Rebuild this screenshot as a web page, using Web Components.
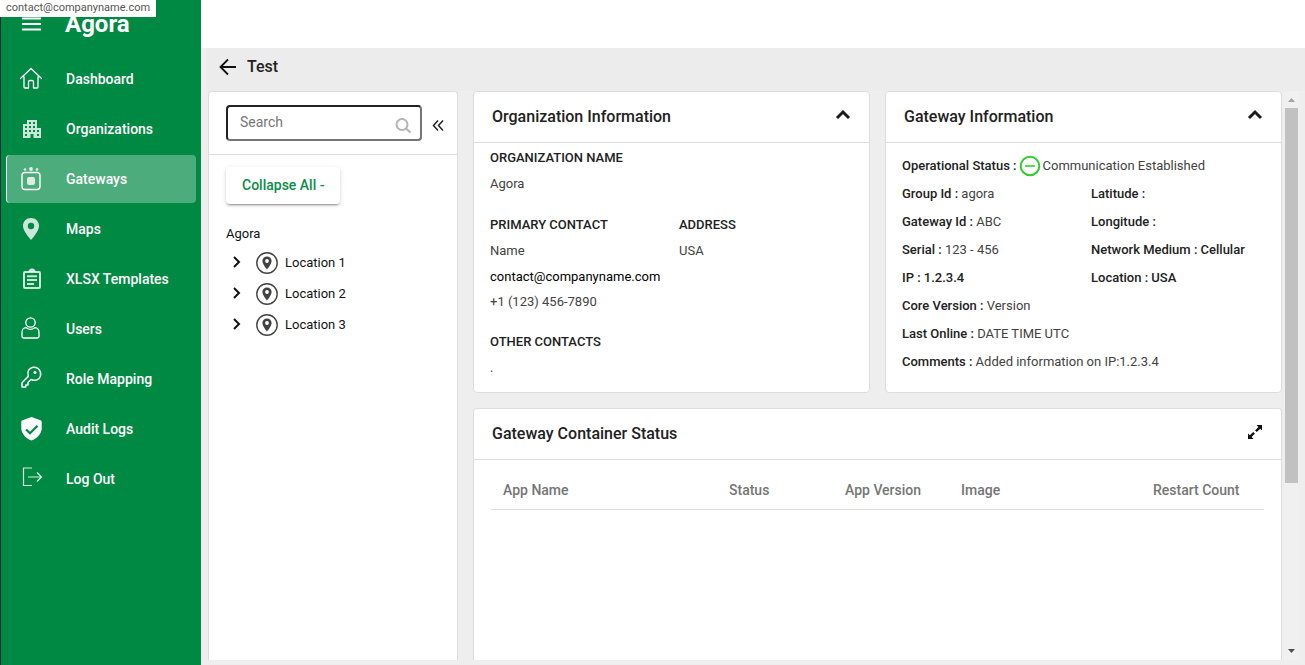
<!DOCTYPE html>
<html lang="en">
<head>
<meta charset="utf-8">
<title>Agora - Gateways</title>
<style>
  html, body { height: 100%; margin: 0; }
  body { font-family: Roboto, "Liberation Sans", sans-serif; font-size: 13px; color: #212121; background: #eee; overflow: hidden; }
</style>
</head>
<body>
<agora-app></agora-app>

<script>
const ICONS = {
  menu: '<path d="M1 4.500h19M1 10h19M1 15.500h19" transform="translate(1 1)" fill="none" stroke="#fff" stroke-width="2"/>',
  home: '<path d="M.5 10.500 11 .5l10.500 10M4 9V19q0 1 1 1h3.500v-6q0-1.500 1.500-1.500h2q1.500 0 1.500 1.500v6H17q1 0 1-1V9" fill="none" stroke="#fff" stroke-width="1.300" stroke-linejoin="round" stroke-linecap="round"/>',
  building: '<path fill="#fff" opacity=".8" fill-rule="evenodd" d="M7 2h10v8h4v10h-7.500v-4h-3v4H3V6h4V2zM9 4v2h2V4zM13 4v2h2V4zM9 8v2h2V8zM13 8v2h2V8zM5 8v2h2V8zM5 12v2h2v-2zM9 12v2h2v-2zM13 12v2h2v-2zM17 12v2h2v-2zM5 16v2h2v-2zM17 16v2h2v-2z"/>',
  gateway: '<rect x="2" y="4.500" width="18" height="17" rx="3" fill="none" stroke="#fff" stroke-width="1.400"/><rect x="7" y="9" width="8" height="8" rx="2" fill="#fff" opacity=".8"/><g fill="#fff" opacity=".85"><circle cx="5" cy="1.500" r="1.300"/><circle cx="11" cy="1" r="1.900"/><circle cx="17" cy="1.500" r="1.300"/></g>',
  pin: '<path fill="#fff" opacity=".8" fill-rule="evenodd" d="M11 0c4.600 0 8 3.400 8 8 0 5.500-8 14-8 14S3 13.500 3 8c0-4.600 3.400-8 8-8zm0 4.800a3.200 3.200 0 1 0 0 6.400 3.200 3.200 0 0 0 0-6.400z"/>',
  clipboard: '<g fill="none" stroke="#fff" stroke-width="2" opacity=".8"><rect x="4" y="4" width="16" height="16" rx="1"/><path d="M7 8.200h10M7 12h10M7 16h7"/></g><path d="M8.500 4a3.500 3.500 0 0 1 7 0z" fill="#fff" opacity=".8"/>',
  user: '<g fill="none" stroke="#fff" stroke-width="1.300" transform="translate(0 -1)"><circle cx="10.500" cy="5.500" r="4.700"/><path d="M6.200 10.700C3.300 10.700 2 12.700 2 15.500V19q0 2 2 2h13q2 0 2-2v-3.500c0-2.800-1.300-4.800-4.200-4.800-2.600 2-6 2-8.600 0z"/></g>',
  key: '<g transform="translate(0 -2)"><path d="M11.500 13.500l1.500.7c5 1 8.500-3 7.500-7.700C19.800 3 16.500.8 13 1.200 9 2 7 5.500 8.200 9.200v1.300L2 16.800V21h3.800v-2H8v-2.500l3-3" fill="none" stroke="#fff" stroke-width="1.500" stroke-linejoin="round" stroke-linecap="round"/><circle cx="15" cy="6.500" r="1.500" fill="#fff"/></g>',
  shield: '<path fill="#fff" d="M11.500-1l9 3.200q1.200.4 1.200 1.600v7c-.2 5.200-5.200 10.200-10.200 11.700-5-1.500-10-6.500-10.200-11.700v-7q0-1.200 1.200-1.600z"/><path d="M6 11.500l4 3.700 7.500-7.500" fill="none" stroke="#008943" stroke-width="2.200"/>',
  logout: '<path d="M12 0H3.500v17.500H12M8 9h13.500M17 4.500 21.500 9 17 13.500" fill="none" stroke="#fff" stroke-width="1.200" opacity=".85"/>',
  back: '<path d="M19 11H4M11 3.500 3.500 11l7.500 7.500" fill="none" stroke="#111" stroke-width="1.800"/>',
  search: '<circle cx="10" cy="10.500" r="5.500" fill="none" stroke="#b4b4b4" stroke-width="2"/><path d="M14 14.500 18.500 18.500" stroke="#b4b4b4" stroke-width="2.200"/>',
  collapse: '<path d="M11 6.500 6.500 11.500l4.500 5M16 6.500 11.500 11.500l4.500 5" fill="none" stroke="#222" stroke-width="1.500"/>',
  up: '<path d="M5 14l6-6 6 6" fill="none" stroke="#1b1b1b" stroke-width="3"/>',
  right: '<path d="M8 5l5 5-5 5" fill="none" stroke="#111" stroke-width="2"/>',
  place: '<circle cx="11" cy="11" r="10.200" fill="none" stroke="#424242" stroke-width="1.400"/><path fill="#424242" fill-rule="evenodd" d="M11 4.500c2.600 0 4.600 1.900 4.600 4.500 0 3.200-4.600 8.500-4.600 8.500S6.400 12.200 6.400 9c0-2.600 2-4.500 4.600-4.500zm0 2.600a1.900 1.900 0 1 0 0 3.800 1.900 1.900 0 0 0 0-3.800z"/>',
  minus: '<circle cx="11" cy="11" r="9.300" fill="none" stroke="#32cd32" stroke-width="2"/><path d="M6 11h10" stroke="#32cd32" stroke-width="1.600"/>',
  expand: '<path fill="#111" d="M12.500 4H18v5.500l-1.800-1.800-3.400 3.400-1.700-1.700 3.300-3.500zM9.500 18H4v-5.500l1.800 1.800 3.400-3.400 1.700 1.700-3.300 3.500z"/>'
};

function define(name, css, html) {
  const template = document.createElement('template');
  template.innerHTML = `<style>*{box-sizing:border-box}${css}</style>${html}`;
  customElements.define(name, class extends HTMLElement {
    constructor() {
      super();
      this.attachShadow({ mode: 'open' }).append(template.content.cloneNode(true));
    }
  });
}

customElements.define('ui-icon', class extends HTMLElement {
  connectedCallback() {
    if (this.shadowRoot) return;
    this.attachShadow({ mode: 'open' }).innerHTML =
      `<style>:host{display:block;flex:none;width:22px;height:22px}svg{display:block;overflow:visible}</style>
       <svg width="22" height="22" viewBox="0 0 22 22" aria-hidden="true">${ICONS[this.getAttribute('name')]}</svg>`;
  }
});

customElements.define('nav-item', class extends HTMLElement {
  connectedCallback() {
    if (this.shadowRoot) return;
    this.attachShadow({ mode: 'open' }).innerHTML = `
      <style>
        :host { display: block; }
        a { box-sizing: border-box; display: flex; align-items: center; gap: 24px; height: 48px; padding-left: 13px;
            border-left: 1px solid transparent; border-radius: 4px; color: #fff; font-size: 14px; font-weight: 500; text-decoration: none; }
        :host([active]) a { background: rgba(255,255,255,.3); border-left-color: #fff; }
      </style>
      <a href="#"><ui-icon name="${this.getAttribute('icon')}"></ui-icon><slot></slot></a>`;
  }
});

define('side-nav', `
  :host { display: block; background: #008943; border-left: 1px solid #1d2b38; color: #fff; }
  header { display: flex; align-items: center; gap: 23px; height: 48px; padding-left: 19px; margin-bottom: 7px; font-size: 24px; font-weight: 700; }
  nav { display: grid; gap: 2px; padding: 0 5px; }
  button { border: 0; padding: 0; background: none; }
`, `
  <header><button aria-label="Menu"><ui-icon name="menu"></ui-icon></button><span>Agora</span></header>
  <nav>
    <nav-item icon="home">Dashboard</nav-item>
    <nav-item icon="building">Organizations</nav-item>
    <nav-item icon="gateway" active>Gateways</nav-item>
    <nav-item icon="pin">Maps</nav-item>
    <nav-item icon="clipboard">XLSX Templates</nav-item>
    <nav-item icon="user">Users</nav-item>
    <nav-item icon="key">Role Mapping</nav-item>
    <nav-item icon="shield">Audit Logs</nav-item>
    <nav-item icon="logout">Log Out</nav-item>
  </nav>
`);

define('tree-item', `
  :host { display: flex; align-items: center; height: 31px; color: #111; }
  button { border: 0; padding: 0; background: none; margin-right: 8px; }
  ui-icon + span { margin-left: 7px; }
`, `<button aria-label="Expand"><ui-icon name="right"></ui-icon></button><ui-icon name="place"></ui-icon><span><slot></slot></span>`);

define('location-panel', `
  :host { display: block; background: #fff; border: 1px solid #ddd; border-bottom: 0; border-radius: 4px 4px 0 0; }
  .bar { display: flex; align-items: center; gap: 5px; height: 63px; padding: 0 8px 0 17px; border-bottom: 1px solid #ddd; }
  .field { position: relative; flex: 1; }
  input { display: block; width: 100%; height: 36px; padding: 0 30px 2px 12px; border: 2px solid; border-color: #222 #767676 #767676 #222;
          border-radius: 4px; font: 400 14px Roboto, sans-serif; background: #fff; }
  input::placeholder { color: #757575; opacity: 1; }
  .field ui-icon { position: absolute; right: 8px; top: 9px; }
  .fold { border: 0; padding: 4px 0 0; background: none; }
  .body { padding: 12px 17px; }
  .all { height: 37px; padding: 0 16px 2px; border: 0; border-radius: 4px; background: #fff; color: #0a8d48;
         font: 500 14px Roboto, sans-serif; box-shadow: 0 3px 1px -2px rgba(0,0,0,.2), 0 2px 2px rgba(0,0,0,.14), 0 1px 5px rgba(0,0,0,.12); }
  p { margin: 20px 0 3px; line-height: 20px; color: #111; }
`, `
  <div class="bar">
    <div class="field"><input type="text" placeholder="Search" aria-label="Search"><ui-icon name="search"></ui-icon></div>
    <button class="fold" aria-label="Collapse panel"><ui-icon name="collapse"></ui-icon></button>
  </div>
  <div class="body">
    <button class="all">Collapse All -</button>
    <p>Agora</p>
    <tree-item>Location 1</tree-item>
    <tree-item>Location 2</tree-item>
    <tree-item>Location 3</tree-item>
  </div>
`);

customElements.define('info-card', class extends HTMLElement {
  connectedCallback() {
    if (this.shadowRoot) return;
    this.attachShadow({ mode: 'open' }).innerHTML = `
      <style>
        :host { box-sizing: border-box; display: block; background: #fff; border: 1px solid #ddd; border-radius: 4px; }
        header { box-sizing: border-box; display: flex; align-items: center; justify-content: space-between; height: 51px; padding: 0 15px 2px 18px; border-bottom: 1px solid #ddd; }
        h2 { margin: 0; font-size: 16px; font-weight: 500; }
        button { border: 0; padding: 0 0 3px; background: none; }
      </style>
      <header><h2>${this.getAttribute('heading')}</h2>
        <button aria-label="${this.getAttribute('action')}"><ui-icon name="${this.getAttribute('icon')}"></ui-icon></button></header>
      <slot></slot>`;
  }
});

define('organization-details', `
  :host { display: block; padding: 2px 16px 11px; line-height: 26px; color: #424242; }
  section { display: grid; grid-template-columns: 1fr 1fr; column-gap: 15px; margin-bottom: 15px; }
  section:last-child { margin-bottom: 0; }
  h3 { margin: 0; font-size: 13px; font-weight: 500; color: #212121; }
  a { color: #000; text-decoration: none; }
  p { margin: 0; }
  .phone { line-height: 24px; }
`, `
  <section><div><h3>ORGANIZATION NAME</h3><p>Agora</p></div></section>
  <section>
    <div><h3>PRIMARY CONTACT</h3><p>Name</p><p><a href="mailto:contact@companyname.com">contact@companyname.com</a></p><p class="phone">+1 (123) 456-7890</p></div>
    <div><h3>ADDRESS</h3><p>USA</p></div>
  </section>
  <section><div><h3>OTHER CONTACTS</h3><p>.</p></div></section>
`);

define('gateway-details', `
  :host { display: grid; grid-template-columns: 1fr 1fr; grid-auto-rows: 28px; column-gap: 15px; padding: 9px 16px 16px; line-height: 28px; color: #424242; white-space: nowrap; }
  b { font-weight: 500; color: #212121; }
  .wide { grid-column: 1 / -1; }
  .status { display: flex; align-items: center; gap: 2px; }
`, `
  <div class="wide status"><b>Operational Status :</b><ui-icon name="minus"></ui-icon><span>Communication Established</span></div>
  <div><b>Group Id :</b> agora</div><div><b>Latitude :</b></div>
  <div><b>Gateway Id :</b> ABC</div><div><b>Longitude :</b></div>
  <div><b>Serial :</b> 123 - 456</div><div><b>Network Medium : Cellular</b></div>
  <div><b>IP : 1.2.3.4</b></div><div><b>Location : USA</b></div>
  <div class="wide"><b>Core Version :</b> Version</div>
  <div class="wide"><b>Last Online :</b> DATE TIME UTC</div>
  <div class="wide"><b>Comments :</b> Added information on IP:1.2.3.4</div>
`);

define('container-table', `
  :host { display: block; padding: 11px 17px; }
  table { width: 100%; table-layout: fixed; border-collapse: collapse; }
  th { height: 38px; padding: 0 12px; text-align: left; font-size: 14px; font-weight: 500; color: #757575; border-bottom: 1px solid #ddd; white-space: nowrap; }
  .mid { width: 116px; } .image { width: 192px; } .count { width: 123px; }
`, `
  <table><thead><tr>
    <th scope="col">App Name</th><th scope="col" class="mid">Status</th><th scope="col" class="mid">App Version</th>
    <th scope="col" class="image">Image</th><th scope="col" class="count">Restart Count</th>
  </tr></thead></table>
`);

define('scroll-rail', `
  :host { display: flex; flex-direction: column; align-items: center; width: 15px; background: #f0f0f0; }
  svg { display: block; flex: none; }
  .track { flex: 1; width: 13px; display: flex; flex-direction: column; }
  .thumb { flex: none; height: 70%; background: #c1c1c1; }
`, `
  <svg width="15" height="17"><path d="M4 11l3.500-4 3.500 4z" fill="#a3a3a3"/></svg>
  <div class="track"><div class="thumb"></div></div>
  <svg width="15" height="17"><path d="M4 6l3.500 4L11 6z" fill="#505050"/></svg>
`);

define('agora-app', `
  :host { display: grid; grid-template-columns: 201px minmax(0, 1fr); height: 100vh; }
  .page { display: grid; grid-template-rows: 48px 43px minmax(0, 1fr); min-height: 0; }
  .top { background: #fff; }
  .title { display: flex; align-items: center; gap: 8px; margin-left: 6px; padding: 0 0 6px 10px; background: #ececec; }
  h1 { margin: 0; font-size: 16px; font-weight: 500; }
  .title a { padding-top: 1px; }
  .main { display: grid; grid-template-columns: 250px minmax(0, 1fr) 15px; padding: 0 6px 5px 7px; min-height: 0; }
  .cards { display: grid; grid-template-columns: 1fr 1fr; grid-template-rows: auto 1fr; gap: 15px; margin: 0 2px 0 15px; min-height: 0; overflow: hidden; }
  .table { grid-column: 1 / -1; border-bottom: 0; border-radius: 4px 4px 0 0; }
  .link { position: absolute; left: 0; top: 0; padding: 0 6px; height: 17px; line-height: 15px; font-size: 11px; color: #555; background: #fff; }
`, `
  <side-nav></side-nav>
  <div class="page">
    <div class="top"></div>
    <div class="title"><a href="#" aria-label="Back"><ui-icon name="back"></ui-icon></a><h1>Test</h1></div>
    <div class="main">
      <location-panel></location-panel>
      <div class="cards">
        <info-card heading="Organization Information" icon="up" action="Collapse"><organization-details></organization-details></info-card>
        <info-card heading="Gateway Information" icon="up" action="Collapse"><gateway-details></gateway-details></info-card>
        <info-card class="table" heading="Gateway Container Status" icon="expand" action="Full screen"><container-table></container-table></info-card>
      </div>
      <scroll-rail></scroll-rail>
    </div>
  </div>
  <div class="link">contact@companyname.com</div>
`);
</script>
</body>
</html>
